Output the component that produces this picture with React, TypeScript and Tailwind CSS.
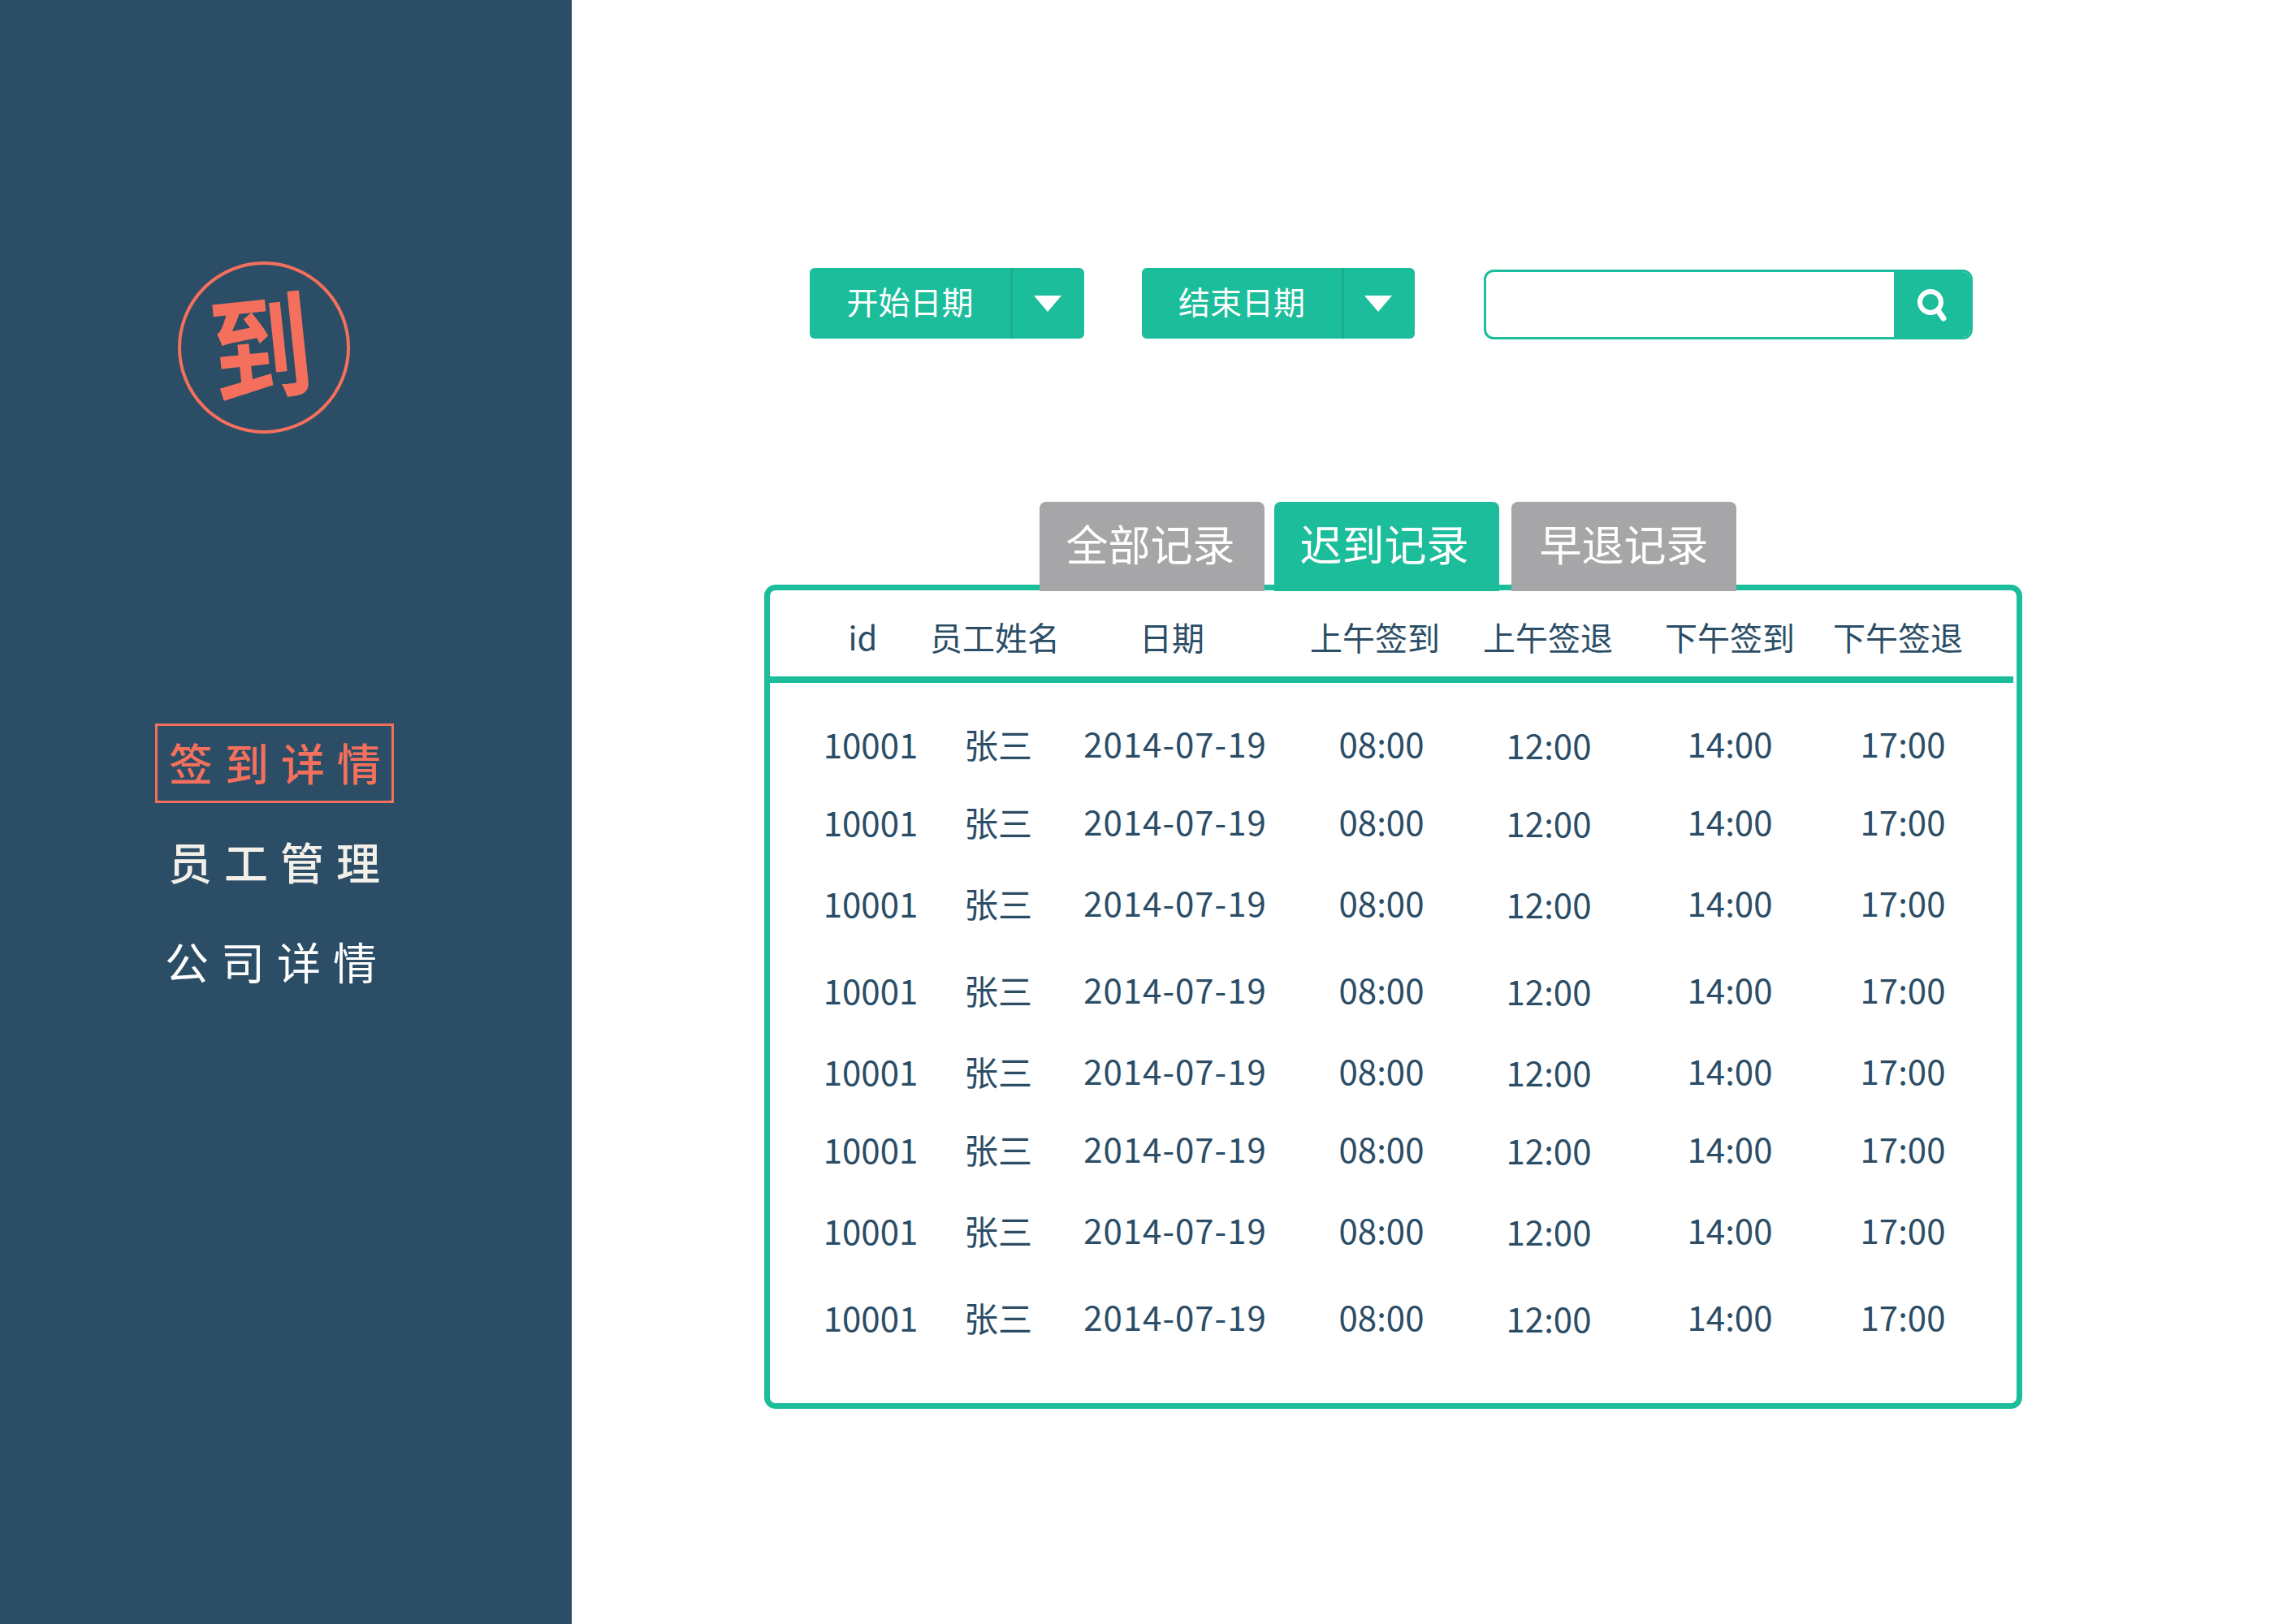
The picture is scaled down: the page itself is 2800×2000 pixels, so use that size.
const cjk = { fontFamily: '"Noto Sans CJK SC", sans-serif' };

const rowGaps = ["mt-[43px]", "mt-[36px]", "mt-[40px]", "mt-[47px]", "mt-[40px]", "mt-[36px]", "mt-[40px]", "mt-[47px]"];

function Caret() {
  return <span className="mr-[3px] h-0 w-0 border-x-[17px] border-t-[20px] border-x-transparent border-t-white" />;
}

function DateButton({ label, width, split }: { label: string; width: string; split: string }) {
  return (
    <button className={`flex h-[87px] items-stretch rounded-[6px] bg-[#1cbd9b] text-[39px] text-white ${width}`}>
      <span className={`flex items-center justify-center border-r-[3px] border-[#1aae8f] pb-[6px] ${split}`}>{label}</span>
      <span className="flex flex-1 items-center justify-center">
        <Caret />
      </span>
    </button>
  );
}

function Tab({ label, active, shift }: { label: string; active?: boolean; shift?: string }) {
  return (
    <div
      className={`flex h-[110px] w-[277px] items-center justify-center rounded-t-[8px] pb-[8px] text-[52px] text-white ${shift ?? ""} ${
        active ? "bg-[#1cbd9b]" : "bg-[#a6a6a8]"
      }`}
    >
      {label}
    </div>
  );
}

function Row({ gap }: { gap: string }) {
  return (
    <div className={`flex h-[60px] items-center pl-[64px] text-center text-[42px] text-[#2b4d66] ${gap}`}>
      <div className="w-[120px] pt-[3px]">10001</div>
      <div className="ml-[52px] w-[90px] pt-[3px]">张三</div>
      <div className="ml-[53px] w-[240px] tracking-[1px]">2014-07-19</div>
      <div className="ml-[79px] w-[110px]">08:00</div>
      <div className="ml-[96px] w-[110px] pt-[4px]">12:00</div>
      <div className="ml-[113px] w-[110px]">14:00</div>
      <div className="ml-[103px] w-[110px]">17:00</div>
    </div>
  );
}

export default function App() {
  return (
    <div className="flex h-[2000px] w-[2800px] overflow-hidden bg-white" style={cjk}>
      {/* Sidebar */}
      <aside className="flex w-[704px] shrink-0 flex-col bg-[#2b4d66]">
        <div className="ml-[219px] mt-[322px] flex h-[212px] w-[212px] items-center justify-center rounded-full border-[4px] border-[#f4705c] pl-[6px]">
          <span className="origin-bottom -rotate-6 scale-y-[1.14] text-[124px] font-bold leading-none text-[#f4705c]">到</span>
        </div>

        <nav className="ml-[191px] mt-[357px] flex flex-col text-[54px] tracking-[15px]">
          <a className="flex h-[98px] w-[294px] items-center whitespace-nowrap border-[3px] border-[#f4705c] pb-[3px] pl-[14px] font-medium text-[#f4705c]">签到详情</a>
          <a className="mt-[24px] flex h-[98px] items-center whitespace-nowrap pb-[3px] pl-[16px] font-medium text-[#f3f0ea]">员工管理</a>
          <a className="mt-[25px] flex h-[98px] items-center whitespace-nowrap pb-[3px] pl-[12px] text-white">公司详情</a>
        </nav>
      </aside>

      {/* Content */}
      <main className="flex flex-1 flex-col">
        <div className="ml-[293px] mt-[330px] flex items-start">
          <DateButton label="开始日期" width="w-[338px]" split="w-[250px]" />
          <div className="w-[71px]" />
          <DateButton label="结束日期" width="w-[336px]" split="w-[249px]" />
          <div className="ml-[85px] mt-[2px] flex h-[86px] w-[602px] overflow-hidden rounded-[12px] border-[3px] border-[#1cbd9b]">
            <div className="flex-1" />
            <div className="flex w-[94px] items-center justify-center bg-[#1cbd9b]">
              <svg width="38" height="42" viewBox="0 0 38 42" fill="none" stroke="white" strokeLinecap="round">
                <circle cx="17" cy="18" r="13" strokeWidth="6" />
                <path d="M26 28 L33 38" strokeWidth="7" />
              </svg>
            </div>
          </div>
        </div>

        <div className="relative ml-[237px] mt-[302px] h-[1015px] w-[1549px]">
          <div className="absolute left-[339px] top-[-102px] z-10 flex gap-[12px]">
            <Tab label="全部记录" shift="pr-[4px]" />
            <Tab label="迟到记录" active shift="pr-[6px]" />
            <div className="ml-[3px]">
              <Tab label="早退记录" />
            </div>
          </div>

          <div className="flex h-full flex-col rounded-[14px] border-[7px] border-[#1cbd9b]">
            <div className="flex h-[106px] shrink-0 items-center pl-[94px] pt-[7px] text-center text-[40px] text-[#2b4d66]">
              <div className="w-[41px]">id</div>
              <div className="ml-[62px] w-[160px] whitespace-nowrap">员工姓名</div>
              <div className="ml-[98px] w-[80px] whitespace-nowrap">日期</div>
              <div className="ml-[130px] w-[160px] whitespace-nowrap">上午签到</div>
              <div className="ml-[53px] w-[160px] whitespace-nowrap">上午签退</div>
              <div className="ml-[64px] w-[160px] whitespace-nowrap">下午签到</div>
              <div className="ml-[47px] w-[160px] whitespace-nowrap">下午签退</div>
            </div>
            <div className="mr-[4px] h-[8px] shrink-0 bg-[#1cbd9b]" />
            <div className="flex flex-col">
              {rowGaps.map((g, i) => (
                <Row key={i} gap={g} />
              ))}
            </div>
          </div>
        </div>
      </main>
    </div>
  );
}
